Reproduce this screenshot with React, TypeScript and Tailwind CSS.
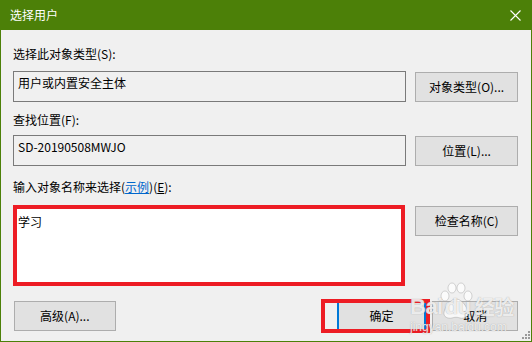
const font = "font-['Microsoft_YaHei_UI','Noto_Sans_CJK_SC',sans-serif]";

function WinButton({ label, className = '' }: { label: string; className?: string }) {
  return (
    <div
      className={`flex items-center justify-center h-[30px] bg-[#e1e1e1] border border-[#adadad] text-[12px] leading-[16px] text-black ${className}`}
    >
      {label}
    </div>
  );
}

function ReadonlyBox({ value }: { value: string }) {
  return (
    <div className="w-[394px] h-[31px] border border-[#7a7a7a] bg-[#f0f0f0] px-[4px] pt-[3px] text-[12px] leading-[16px] text-black">
      {value}
    </div>
  );
}

function BaiduMark() {
  // faint watermark over the lower right corner
  return (
    <div className="absolute left-[408px] top-[280px] w-[124px] h-[56px] pointer-events-none text-white/80 [text-shadow:0_0_1px_rgba(120,120,120,0.7)]">
      <svg className="absolute left-[28px] top-[2px]" width="40" height="38" viewBox="0 0 40 38">
        <g fill="rgba(255,255,255,0.75)" stroke="rgba(150,150,150,0.5)" strokeWidth="0.8">
          <ellipse cx="9" cy="14" rx="4" ry="5" />
          <ellipse cx="16" cy="6" rx="4" ry="5" />
          <ellipse cx="25" cy="6" rx="4" ry="5" />
          <ellipse cx="32" cy="14" rx="4" ry="5" />
          <path d="M20 17c-6 0-11 8-12 13c-1 5 4 7 8 6c3-1 5-1 8 0c4 1 9-1 8-6c-1-5-6-13-12-13z" />
        </g>
      </svg>
      <div className="absolute left-[2px] top-[15px] flex items-end font-['Liberation_Sans',sans-serif] font-bold text-[22px] leading-[24px] tracking-[-0.5px]">
        <span>Bai</span>
        <span className="ml-[2px]">du</span>
        <span className={`${font} ml-[4px] text-[20px]`}>经验</span>
      </div>
      <div className="absolute left-[2px] top-[40px] font-['Liberation_Sans',sans-serif] text-[12px] leading-[14px]">
        jingyan.baidu.com
      </div>
    </div>
  );
}

export default function App() {
  return (
    <div className={`relative w-[532px] h-[342px] bg-[#4c8008] px-[1px] pb-[1px] flex flex-col ${font}`}>
      {/* Title bar */}
      <div className="h-[30px] flex items-center justify-between pl-[9px] pr-[10px]">
        <span className="text-white text-[12px] leading-[16px]">选择用户</span>
        <svg width="11" height="11" viewBox="0 0 11 11">
          <path d="M0.5 0.5L10.5 10.5M10.5 0.5L0.5 10.5" stroke="white" strokeWidth="1.1" />
        </svg>
      </div>

      {/* Body */}
      <div className="flex-1 bg-[#f0f0f0] pl-[12px] pr-[13px] text-[12px] leading-[16px] text-black">
        <div className="mt-[16px]">选择此对象类型(S):</div>
        <div className="mt-[9px] flex gap-[9px] items-start">
          <ReadonlyBox value="用户或内置安全主体" />
          <WinButton label="对象类型(O)..." className="w-[103px] mt-[1px]" />
        </div>

        <div className="mt-[10px]">查找位置(F):</div>
        <div className="mt-[7px] flex gap-[9px] items-start">
          <ReadonlyBox value="SD-20190508MWJO" />
          <WinButton label="位置(L)..." className="w-[103px] mt-[1px]" />
        </div>

        <div className="mt-[13px]">
          输入对象名称来选择(<span className="text-[#0066cc] underline">示例</span>)(<span className="underline">E</span>):
        </div>
        <div className="mt-[10px] flex items-start">
          <div className="w-[393px] h-[81px] border-[4px] border-[#ed1c24] bg-white px-[1px] pt-[5px]">学习</div>
          <WinButton label="检查名称(C)" className="w-[103px] ml-[10px] mt-[1px] h-[29px]" />
        </div>

        <div className="mt-[13px] flex items-start">
          <WinButton label="高级(A)..." className="w-[102px] ml-[1px] mt-[2px]" />
          <div className="ml-[205px] w-[110px] h-[34px] border-[4px] border-[#ed1c24] bg-[#f0f0f0] flex">
            <div className="w-[12px]" />
            <div className="flex-1 flex items-center justify-center bg-[#e1e1e1] border-x-[2px] border-[#0078d7]">
              确定
            </div>
          </div>
          <WinButton label="取消" className="w-[86px] ml-[2px] mt-[2px]" />
        </div>
      </div>

      {/* resize grip */}
      <svg className="absolute right-[2px] bottom-[3px]" width="9" height="9" viewBox="0 0 9 9">
        <g fill="#9a9a9a">
          <rect x="7" y="1" width="2" height="2" />
          <rect x="4" y="4" width="2" height="2" />
          <rect x="7" y="4" width="2" height="2" />
          <rect x="1" y="7" width="2" height="2" />
          <rect x="4" y="7" width="2" height="2" />
          <rect x="7" y="7" width="2" height="2" />
        </g>
      </svg>

      <BaiduMark />
    </div>
  );
}
